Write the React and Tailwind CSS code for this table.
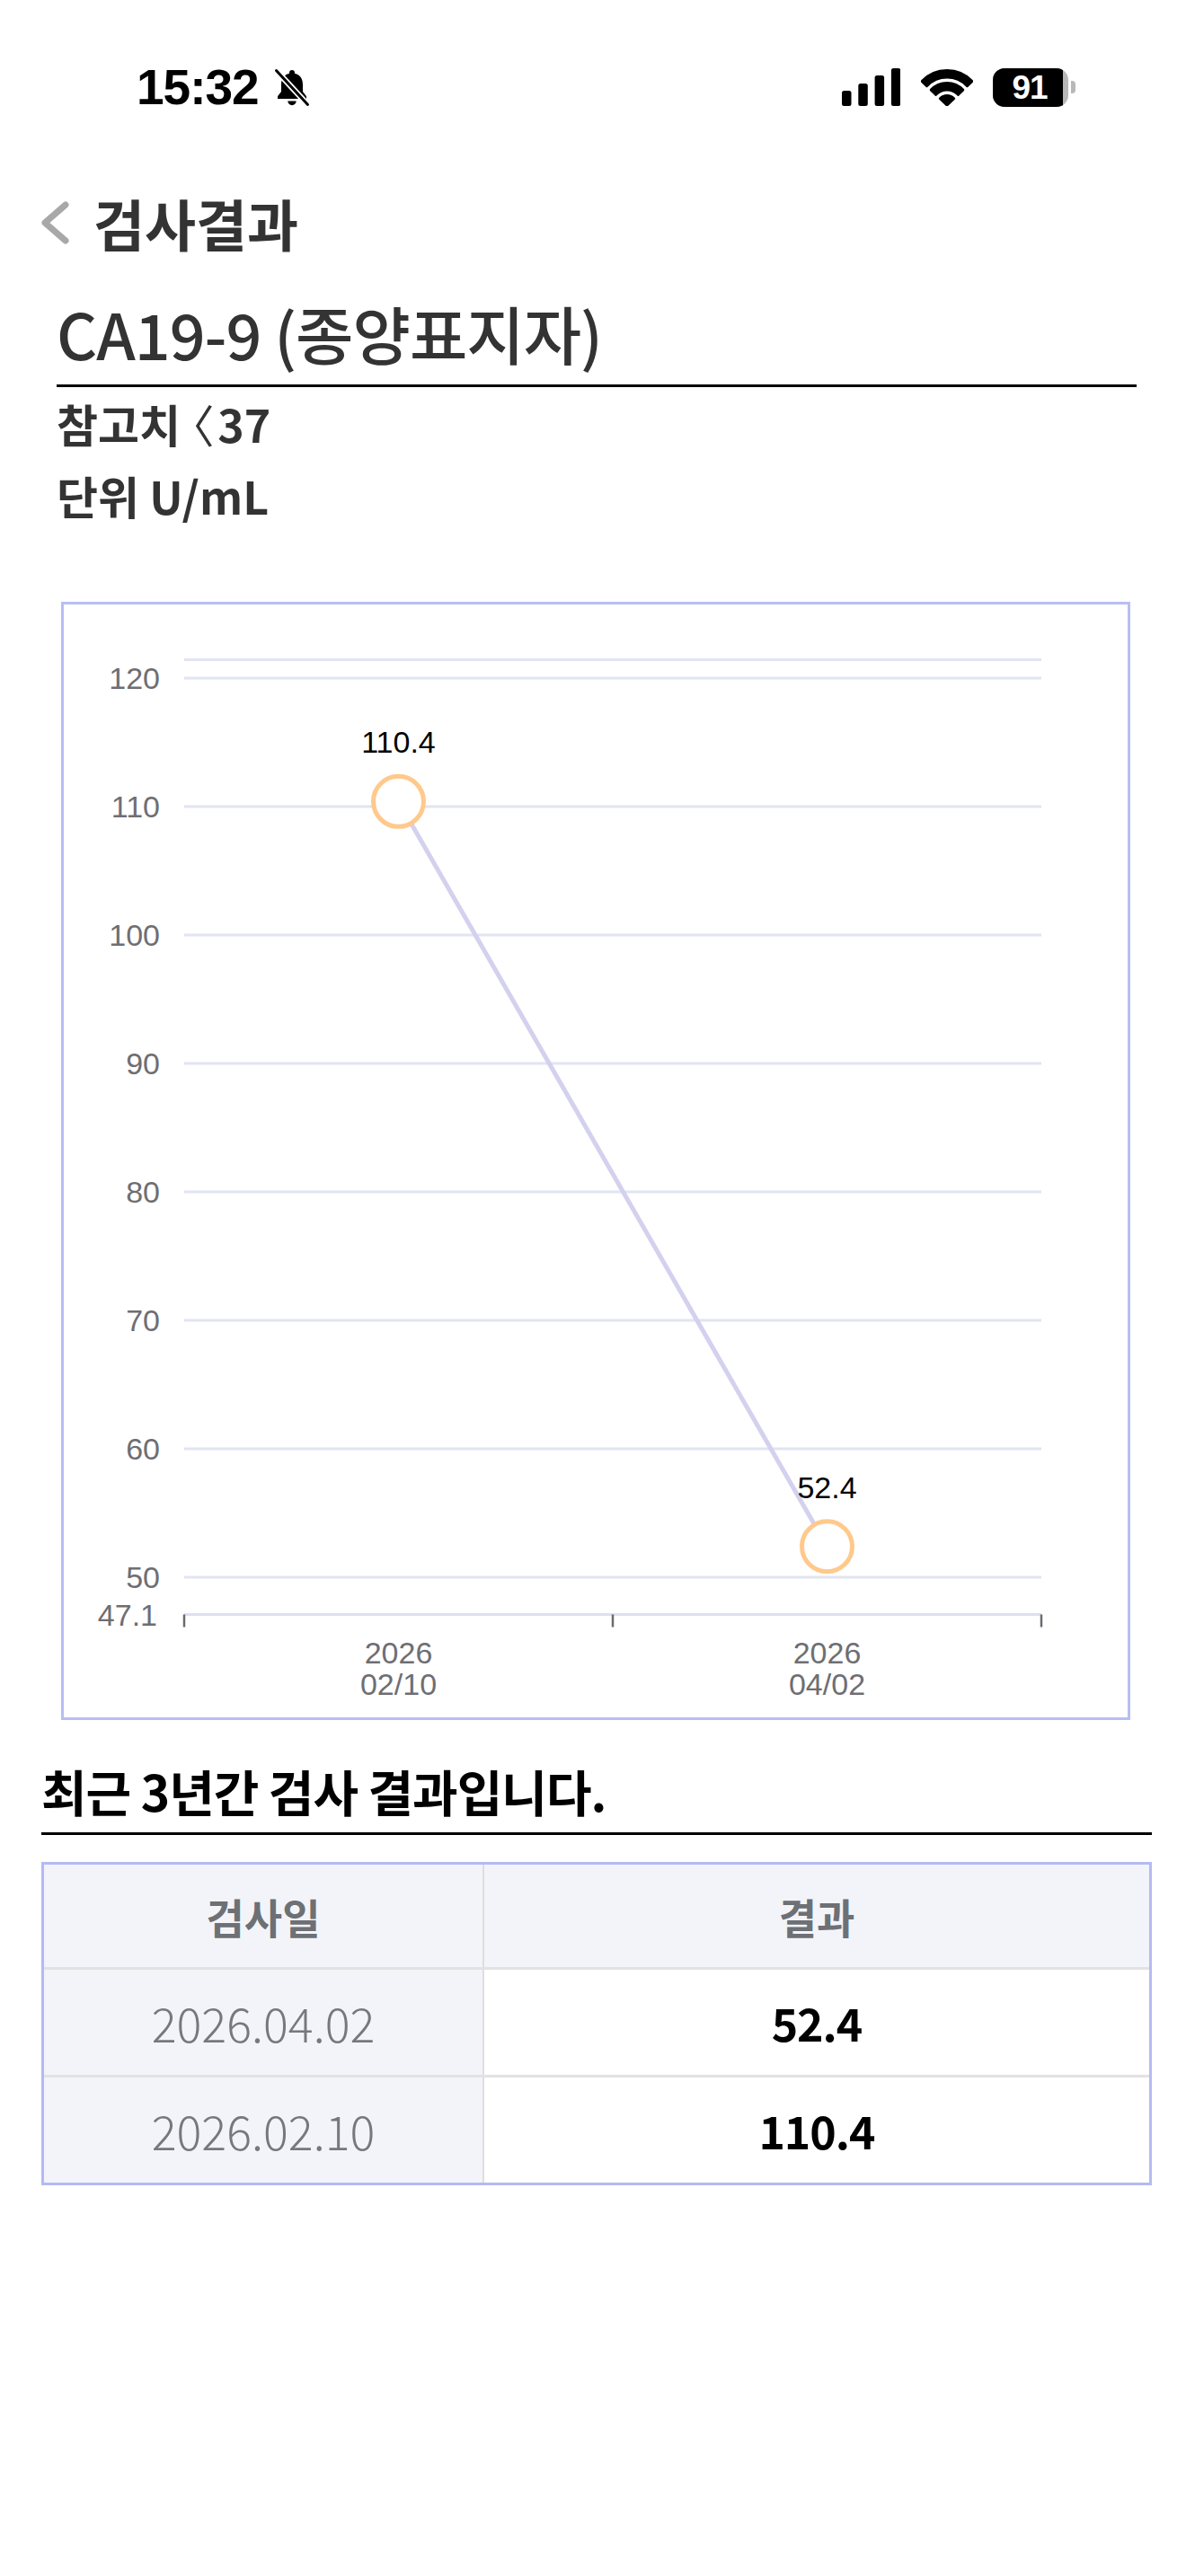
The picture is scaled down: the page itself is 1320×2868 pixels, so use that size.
import React from "react";

const points = [
  { label: ["2026", "02/10"], value: 110.4 },
  { label: ["2026", "04/02"], value: 52.4 },
];

const rows = [
  { date: "2026.04.02", value: "52.4" },
  { date: "2026.02.10", value: "110.4" },
];

const ticks = [120, 110, 100, 90, 80, 70, 60, 50];

// chart scale: min 47.1 (52.4 * 0.9), max 121.44 (110.4 * 1.1)
const yOf = (v) => 1124.5 - (v - 47.1) * 14.3;
const xOf = (i) => 372.5 + i * 477;

const sector = (cx, cy, r1, r2, a) => {
  const s = Math.sin(a);
  const c = Math.cos(a);
  if (r1 === 0) {
    return `M${cx} ${cy} L${cx - r2 * s} ${cy - r2 * c} A${r2} ${r2} 0 0 1 ${cx + r2 * s} ${cy - r2 * c} Z`;
  }
  return `M${cx - r2 * s} ${cy - r2 * c} A${r2} ${r2} 0 0 1 ${cx + r2 * s} ${cy - r2 * c} L${cx + r1 * s} ${cy - r1 * c} A${r1} ${r1} 0 0 0 ${cx - r1 * s} ${cy - r1 * c} Z`;
};

const StatusBar = () => {
  const a = (46.5 * Math.PI) / 180;
  return (
    <div className="h-[194px] flex items-center justify-between pl-[152px] pr-[123px]">
      <div className="flex items-center gap-[16px]">
        <span className="font-['Liberation_Sans',Arial,sans-serif] font-bold text-[55px] leading-none tracking-[-1px] text-black">
          15:32
        </span>
        <svg width="42" height="45" viewBox="0 0 42 45">
          <path
            d="M21 3c-2 0-3 1.3-3 3v.7C11.6 8.4 9 13.2 9 19v8l-4 5.3V35h32v-2.7L33 27v-8c0-5.8-2.6-10.6-9-12.3V6c0-1.7-1-3-3-3z"
            fill="#000"
          />
          <path d="M16.3 37.5a4.7 4.7 0 0 0 9.4 0z" fill="#000" />
          <line x1="3.5" y1="3.5" x2="38.5" y2="41.5" stroke="#fff" strokeWidth="6.5" strokeLinecap="round" />
          <line x1="3.5" y1="3.5" x2="38.5" y2="41.5" stroke="#000" strokeWidth="3" strokeLinecap="round" />
        </svg>
      </div>
      <div className="flex items-center">
        <svg width="65" height="42" viewBox="0 0 65 42">
          {[17, 25, 34, 42].map((h, i) => (
            <rect key={i} x={i * 18.3} y={42 - h} width="10.5" height={h} rx="2.5" fill="#000" />
          ))}
        </svg>
        <svg width="58" height="41" viewBox="0 0 58 41" className="ml-[23px]">
          <g fill="#000" stroke="#000" strokeWidth="3" strokeLinejoin="round">
            <path d={sector(29, 40, 0, 10.5, a)} />
            <path d={sector(29, 40, 17, 24.5, a)} />
            <path d={sector(29, 40, 31, 38.5, a)} />
          </g>
        </svg>
        <div className="ml-[22px] flex items-center">
          <div className="w-[84px] h-[43px] rounded-[13px] overflow-hidden flex bg-[#b8b8b8]">
            <div className="w-[78px] h-full bg-black text-white flex items-center justify-center pl-[4px] font-['Liberation_Sans',Arial,sans-serif] font-bold text-[37px] leading-none tracking-[-1px]">
              91
            </div>
          </div>
          <div className="ml-[3px] w-[5px] h-[14px] rounded-r-[4px] bg-[#b8b8b8]" />
        </div>
      </div>
    </div>
  );
};

const Chart = () => {
  const line = points.map((p, i) => `${xOf(i)},${yOf(p.value)}`).join(" ");
  return (
    <svg width="1184" height="1239" viewBox="0 0 1184 1239" className="block">
      {[121.44, ...ticks].map((v) => (
        <line key={v} x1="134" x2="1088" y1={yOf(v)} y2={yOf(v)} stroke="#e1e4f2" strokeWidth="3" />
      ))}
      <line x1="134" x2="1088" y1={yOf(47.1)} y2={yOf(47.1)} stroke="#dde0ee" strokeWidth="3" />
      {[134, 611, 1088].map((x) => (
        <line key={x} x1={x} x2={x} y1={yOf(47.1)} y2={yOf(47.1) + 14} stroke="#6b6b70" strokeWidth="2.5" />
      ))}
      <g fontFamily="'Liberation Sans', Arial, sans-serif" fontSize="34" fill="#6e6e73">
        {ticks.map((v) => (
          <text key={v} x="107" y={yOf(v)} textAnchor="end" dominantBaseline="central">
            {v}
          </text>
        ))}
        <text x="104" y={yOf(47.1)} textAnchor="end" dominantBaseline="central">
          47.1
        </text>
        {points.map((p, i) => (
          <g key={i}>
            <text x={xOf(i)} y="1167" textAnchor="middle" dominantBaseline="central">
              {p.label[0]}
            </text>
            <text x={xOf(i)} y="1202" textAnchor="middle" dominantBaseline="central">
              {p.label[1]}
            </text>
          </g>
        ))}
      </g>
      <polyline points={line} fill="none" stroke="#d4d1ef" strokeWidth="5" />
      {points.map((p, i) => (
        <g key={i}>
          <circle cx={xOf(i)} cy={yOf(p.value)} r="28" fill="#fff" stroke="#ffc98c" strokeWidth="5" />
          <text
            x={xOf(i)}
            y={yOf(p.value) - 66}
            textAnchor="middle"
            dominantBaseline="central"
            fontFamily="'Liberation Sans', Arial, sans-serif"
            fontSize="34"
            fill="#000"
          >
            {p.value}
          </text>
        </g>
      ))}
    </svg>
  );
};

export default function App() {
  return (
    <div className="w-[1320px] min-h-[2868px] bg-white font-['Noto_Sans_CJK_KR','Noto_Sans',sans-serif]">
      <StatusBar />

      {/* header */}
      <div className="h-[108px] flex items-center pl-[44px]">
        <svg width="34" height="48" viewBox="0 0 34 48">
          <polyline points="29,4 6,24 29,44" fill="none" stroke="#a8a8a8" strokeWidth="7" strokeLinecap="round" strokeLinejoin="round" />
        </svg>
        <span className="ml-[26px] text-[62px] font-bold leading-none text-[#333]">검사결과</span>
      </div>

      {/* test info */}
      <div className="ml-[63px] mr-[55px]">
        <div className="mt-[27px] pb-[15px] border-b-[3px] border-black">
          <h1 className="text-[70px] font-medium leading-[84px] text-[#333] tracking-[-1px]">CA19-9 (종양표지자)</h1>
        </div>
        <div className="text-[50px] font-semibold leading-[80px] text-[#333]">
          <div>
            참고치 <span className="font-normal mr-[5px] [font-feature-settings:'palt']">〈</span>37
          </div>
          <div>단위 U/mL</div>
        </div>
      </div>

      {/* chart */}
      <div className="mt-[79px] ml-[68px] w-[1190px] h-[1245px] border-[3px] border-[#b9bdf5] bg-white">
        <Chart />
      </div>

      {/* history table */}
      <div className="ml-[46px] w-[1236px]">
        <div className="mt-[42px] pb-[11px] border-b-[3px] border-black">
          <h2 className="text-[55px] font-bold leading-[72px] text-black tracking-[-1px]">최근 3년간 검사 결과입니다.</h2>
        </div>
        <div className="mt-[30px] border-[3px] border-[#b5baf3]">
          <div className="grid grid-cols-[490px_1fr] h-[117px] bg-[#f3f4f9] border-b-[3px] border-[#e2e2e2]">
            <div className="flex items-center justify-center border-r-2 border-[#dedede] text-[46px] font-bold text-[#6d7075]">
              검사일
            </div>
            <div className="flex items-center justify-center text-[46px] font-bold text-[#6d7075]">결과</div>
          </div>
          {rows.map((r, i) => (
            <div
              key={r.date}
              className={`grid grid-cols-[490px_1fr] ${i === 0 ? "h-[120px] border-b-[3px] border-[#e2e2e2]" : "h-[117px]"}`}
            >
              <div className="flex items-center justify-center bg-[#f3f4f9] border-r-2 border-[#dedede] text-[52px] font-light text-[#77777c]">
                {r.date}
              </div>
              <div className="flex items-center justify-center bg-white text-[50px] font-bold text-black tracking-[-1px]">
                {r.value}
              </div>
            </div>
          ))}
        </div>
      </div>
    </div>
  );
}
